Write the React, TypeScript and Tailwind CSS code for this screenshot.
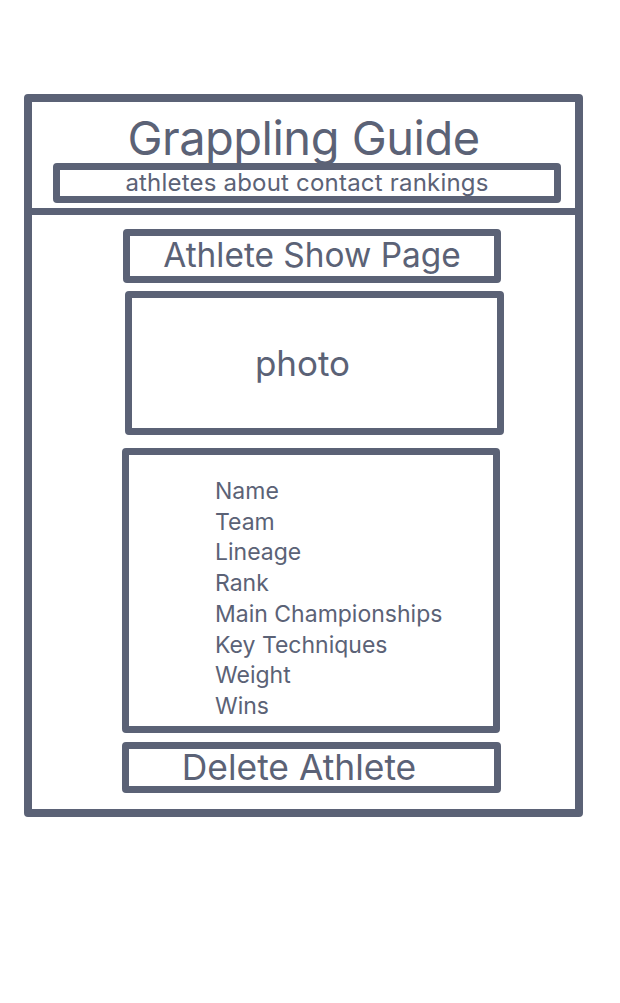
const FIELDS = [
  'Name',
  'Team',
  'Lineage',
  'Rank',
  'Main Championships',
  'Key Techniques',
  'Weight',
  'Wins',
];

const BORDER = 'border-[7px] border-[#5b6276] rounded-[4px]';

export default function App() {
  return (
    <div
      className="min-h-[1003px] w-[620px] bg-white pt-[94px] text-[#5b6276]"
      style={{ fontFamily: 'Inter, "Noto Sans", sans-serif' }}
    >
      <div className="ml-[24px] flex w-[559px] flex-col rounded-[4px] border-[8px] border-[#5b6276]">
        {/* Header */}
        <header className="flex flex-col border-b-[7px] border-[#5b6276] pb-[5px] pt-[12px]">
          <h1 className="text-center text-[47px] leading-none tracking-[-0.5px]">
            Grappling Guide
          </h1>
          <nav
            className={`${BORDER} ml-[21px] mt-[2px] flex h-[40px] w-[508px] items-center justify-center text-[24px] leading-none tracking-[0.2px]`}
          >
            athletes about contact rankings
          </nav>
        </header>

        {/* Show page body */}
        <main className="flex flex-col items-start pb-[16px] pt-[14px]">
          <div
            className={`${BORDER} ml-[91px] flex h-[54px] w-[378px] items-center justify-center text-[33.4px] leading-none`}
          >
            Athlete Show Page
          </div>

          <div
            className={`${BORDER} ml-[93px] mt-[8px] flex h-[144px] w-[379px] items-center justify-center pr-[24px] text-[35px] leading-none`}
          >
            photo
          </div>

          <ul
            className={`${BORDER} ml-[90px] mt-[13px] h-[285px] w-[378px] pl-[86px] pt-[21px] text-[23px] leading-[30.7px]`}
          >
            {FIELDS.map((field) => (
              <li key={field}>{field}</li>
            ))}
          </ul>

          <button
            className={`${BORDER} ml-[90px] mt-[9px] flex h-[51px] w-[379px] items-center justify-center pr-[25px] text-[35.4px] leading-none`}
          >
            Delete Athlete
          </button>
        </main>
      </div>
    </div>
  );
}
